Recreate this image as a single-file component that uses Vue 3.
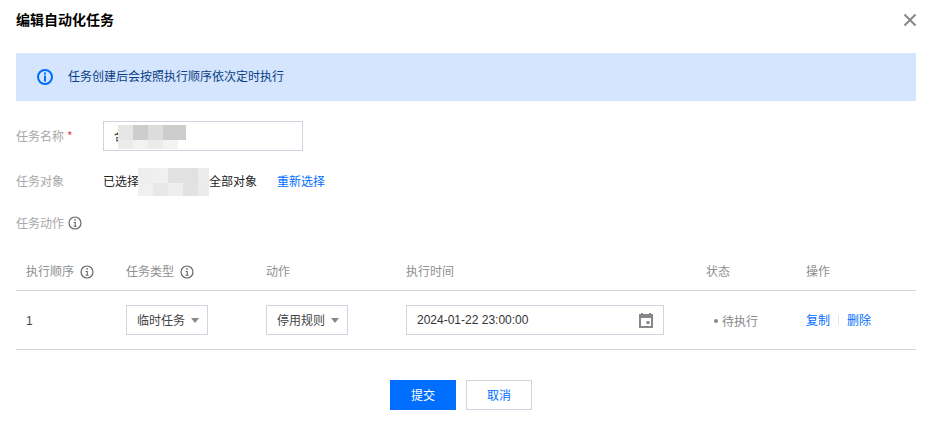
<script setup>
const cols = ['执行顺序', '任务类型', '动作', '执行时间', '状态', '操作']
const withInfo = [true, true, false, false, false, false]
const inputMosaic = [
  { l: 0, t: 0, w: 15, h: 15, c: '#e6e6e6' }, { l: 15, t: 0, w: 15, h: 15, c: '#cdcdcd' },
  { l: 30, t: 0, w: 15, h: 15, c: '#dcdcdc' }, { l: 45, t: 0, w: 23, h: 15, c: '#cccccc' },
  { l: 0, t: 15, w: 15, h: 9, c: '#ebebeb' }, { l: 15, t: 15, w: 15, h: 9, c: '#f2f2f2' },
  { l: 30, t: 15, w: 15, h: 9, c: '#ebebeb' }, { l: 45, t: 15, w: 15, h: 9, c: '#f3f3f3' }
]
const targetMosaic = [
  { l: 0, t: 0, w: 15, h: 15, c: '#eeeeee' }, { l: 15, t: 0, w: 15, h: 15, c: '#f0f0f0' },
  { l: 30, t: 0, w: 30, h: 15, c: '#e1e1e1' }, { l: 60, t: 0, w: 11, h: 15, c: '#ececec' },
  { l: 0, t: 15, w: 15, h: 13, c: '#f0f0f0' }, { l: 15, t: 15, w: 15, h: 13, c: '#e8e8e8' },
  { l: 30, t: 15, w: 15, h: 13, c: '#eeeeee' }, { l: 45, t: 15, w: 15, h: 13, c: '#e2e2e2' },
  { l: 60, t: 15, w: 11, h: 13, c: '#ebebeb' }
]
const cell = (m) => ({ left: m.l + 'px', top: m.t + 'px', width: m.w + 'px', height: m.h + 'px', background: m.c })
</script>

<template>
  <div class="dialog">
    <header class="head">
      <h3 class="title">编辑自动化任务</h3>
      <svg class="close" width="14" height="14" viewBox="0 0 14 14"><path d="M1.5 1.5l11 11M12.5 1.5l-11 11" stroke="#888" stroke-width="2" fill="none"/></svg>
    </header>

    <div class="alert">
      <svg class="alert-icon" width="16" height="16" viewBox="0 0 16 16">
        <circle cx="8" cy="8" r="7" fill="none" stroke="#006eff" stroke-width="2"/>
        <rect x="7" y="3.5" width="2" height="2" fill="#006eff"/>
        <rect x="7" y="6.5" width="2" height="6" fill="#006eff"/>
      </svg>
      <span class="alert-text">任务创建后会按照执行顺序依次定时执行</span>
    </div>

    <div class="form-row row-name">
      <label class="label">任务名称<i class="req">*</i></label>
      <div class="input name-input">
        <span>合</span>
        <div class="mosaic m-input"><b v-for="(m, i) in inputMosaic" :key="i" :style="cell(m)"></b></div>
      </div>
    </div>

    <div class="form-row row-target">
      <label class="label">任务对象</label>
      <div class="target">
        <span>已选择</span>
        <div class="gap-box"><div class="mosaic m-target"><b v-for="(m, i) in targetMosaic" :key="i" :style="cell(m)"></b></div></div>
        <span>全部对象</span>
        <a class="link reselect">重新选择</a>
      </div>
    </div>

    <div class="form-row row-action">
      <label class="label action-label">任务动作
        <svg class="info" width="14" height="14" viewBox="0 0 14 14"><circle cx="7" cy="7" r="6" fill="none" stroke="#666" stroke-width="1.2"/><rect x="6.3" y="3.2" width="1.5" height="1.5" fill="#666"/><path d="M5.6 6h2.2v3.8h.8v.9H5.5v-.9h1.2V6.9H5.6z" fill="#666"/></svg>
      </label>
    </div>

    <div class="table">
      <div class="tr th">
        <div v-for="(c, i) in cols" :key="c" class="td">
          {{ c }}
          <svg v-if="withInfo[i]" class="info" width="14" height="14" viewBox="0 0 14 14"><circle cx="7" cy="7" r="6" fill="none" stroke="#666" stroke-width="1.2"/><rect x="6.3" y="3.2" width="1.5" height="1.5" fill="#666"/><path d="M5.6 6h2.2v3.8h.8v.9H5.5v-.9h1.2V6.9H5.6z" fill="#666"/></svg>
        </div>
      </div>
      <div class="tr body">
        <div class="td num">1</div>
        <div class="td"><div class="select">临时任务<i class="caret"></i></div></div>
        <div class="td"><div class="select">停用规则<i class="caret"></i></div></div>
        <div class="td">
          <div class="input date">
            <span>2024-01-22 23:00:00</span>
            <svg width="16" height="16" viewBox="0 0 16 16"><path fill="#888" fill-rule="evenodd" d="M3 1h2v1h6V1h2v1h2v14H1V2h2zM3 6v8h10V6z"/><rect x="8.5" y="9" width="3" height="3" fill="#888"/></svg>
          </div>
        </div>
        <div class="td status"><i class="dot"></i>待执行</div>
        <div class="td ops"><a class="link">复制</a><i class="sep"></i><a class="link">删除</a></div>
      </div>
    </div>

    <footer class="foot">
      <button class="btn primary">提交</button>
      <button class="btn">取消</button>
    </footer>
  </div>
</template>

<style>
html, body { margin: 0; background: #fff; }
</style>

<style scoped>
.dialog {
  width: 935px;
  height: 422px;
  box-sizing: border-box;
  padding: 0 19px 0 16px;
  overflow: hidden;
  font: 12px/18px "Noto Sans CJK SC", "Liberation Sans", sans-serif;
  color: #222;
  background: #fff;
}
.head { height: 53px; display: flex; justify-content: space-between; align-items: flex-start; }
.title { margin: 10px 0 0; font-size: 14px; line-height: 18px; font-weight: 700; color: #000; }
.close { margin: 13px -1px 0 0; }
.alert {
  height: 48px;
  background: #d4e5fd;
  display: flex;
  align-items: center;
  padding-left: 21px;
  color: #0b3f86;
}
.alert-icon { margin-right: 15px; }
.alert-text { margin-bottom: 2px; }
.form-row { display: flex; align-items: center; }
.label { width: 87px; color: #a8a8a8; flex: none; }
.req { color: #e54545; font-style: normal; margin-left: 3px; }
.row-name { margin-top: 20px; height: 30px; }
.input {
  box-sizing: border-box;
  height: 30px;
  border: 1px solid #cfd5de;
  display: flex;
  align-items: center;
  position: relative;
  color: #333;
}
.name-input { width: 200px; padding-left: 10px; }
.mosaic { position: absolute; }
.mosaic b { position: absolute; display: block; }
.m-input { left: 14px; top: 3px; }
.row-target { margin-top: 10px; height: 40px; }
.target { display: flex; align-items: center; }
.gap-box { width: 71px; height: 28px; position: relative; flex: none; margin-left: -1px; }
.m-target { left: 0; top: 1px; }
.link { color: #006eff; }
.reselect { margin-left: 20px; }
.row-action { margin-top: 1px; height: 42px; }
.row-action .label { width: auto; display: flex; align-items: center; color: #a8a8a8; gap: 4px; }
.info { vertical-align: -3px; margin-left: 3px; }
.action-label .info { margin-left: 0; }
.table { margin-top: 6px; }
.tr { display: grid; grid-template-columns: 100px 140px 140px 300px 100px 120px; }
.th { height: 39px; padding-top: 1px; border-bottom: 1px solid #cfd5de; color: #8f8f8f; align-items: center; }
.td { padding-left: 10px; }
.body { height: 58px; border-bottom: 1px solid #cfd5de; align-items: center; color: #333; }
.num { font-family: "Liberation Sans", sans-serif; color: #444; padding-top: 1px; }
.select {
  box-sizing: border-box;
  width: 82px;
  height: 30px;
  border: 1px solid #cfd5de;
  display: flex;
  align-items: center;
  padding-left: 10px;
  color: #444;
}
.caret {
  width: 0; height: 0;
  border: 4px solid transparent;
  border-top: 5px solid #888;
  border-bottom: 0;
  margin-left: 6px;
}
.date {
  width: 258px;
  padding: 0 9px 0 10px;
  justify-content: space-between;
  font-family: "Liberation Sans", sans-serif;
}
.status { color: #888; display: flex; align-items: center; padding-left: 18px; padding-top: 2px; }
.dot { width: 4px; height: 4px; border-radius: 50%; background: #888; margin-right: 4px; }
.ops { display: flex; align-items: center; }
.sep { width: 1px; height: 10px; background: #e5e5e5; margin: 0 8px; }
.foot { display: flex; justify-content: center; gap: 10px; margin-top: 30px; padding-right: 10px; }
.btn {
  box-sizing: border-box;
  width: 66px;
  height: 30px;
  border: 1px solid #cfd5de;
  background: #fff;
  color: #006eff;
  font: inherit;
  padding: 0;
}
.primary { background: #006eff; border-color: #006eff; color: #fff; }
</style>
